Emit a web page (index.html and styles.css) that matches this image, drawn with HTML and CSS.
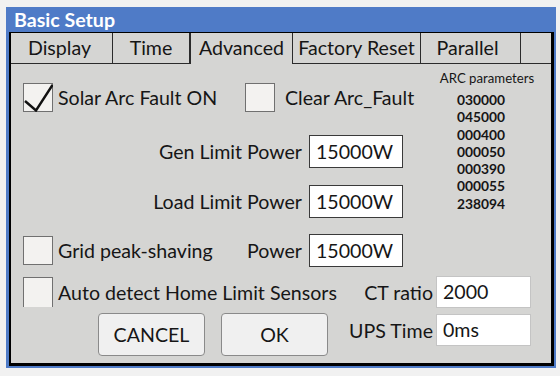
FILE: index.html
```html
<!DOCTYPE html>
<html lang="en">
<head>
  <meta charset="UTF-8" />
  <title>Basic Setup</title>
  <link rel="stylesheet" href="styles.css">
</head>
<body>

  <div class="window">
    <div class="titlebar">Basic Setup</div>

    <div class="frame">
      <div class="tabs">
        <div class="tab tab-display">Display</div>
        <div class="tab tab-time">Time</div>
        <div class="tab tab-advanced active">Advanced</div>
        <div class="tab tab-factory">Factory Reset</div>
        <div class="tab tab-parallel">Parallel</div>
        <div class="tab tab-rest"></div>
      </div>

      <div class="panel">
        <div class="top">
          <div class="form">
            <div class="row row-arc">
              <label class="check check-solar">
                <span class="box">
                  <svg width="30" height="29" viewBox="0 0 30 29">
                    <path d="M2 18 L13 27.5 L29.5 2" fill="none" stroke="#111" stroke-width="2.4" />
                  </svg>
                </span>
                Solar Arc Fault ON
              </label>
              <label class="check check-clear">
                <span class="box"></span>
                Clear Arc_Fault
              </label>
            </div>

            <div class="field row-gen">
              <span class="label">Gen Limit Power</span>
              <div class="input">15000W</div>
            </div>

            <div class="field row-load">
              <span class="label">Load Limit Power</span>
              <div class="input">15000W</div>
            </div>

            <div class="field row-grid">
              <label class="check">
                <span class="box"></span>
                Grid peak-shaving
              </label>
              <span class="label push">Power</span>
              <div class="input">15000W</div>
            </div>
          </div>

          <div class="arc">
            <div class="arc-title">ARC parameters</div>
            <ul class="arc-values">
              <li>030000</li>
              <li>045000</li>
              <li>000400</li>
              <li>000050</li>
              <li>000390</li>
              <li>000055</li>
              <li>238094</li>
            </ul>
          </div>
        </div>

        <div class="row row-auto">
          <label class="check">
            <span class="box box-open"></span>
            Auto detect Home Limit Sensors
          </label>
          <div class="pair">
            <span class="label">CT ratio</span>
            <div class="input input-light">2000</div>
          </div>
        </div>

        <div class="row row-buttons">
          <button class="btn btn-cancel">CANCEL</button>
          <button class="btn btn-ok">OK</button>
          <div class="pair">
            <span class="label">UPS Time</span>
            <div class="input input-light">0ms</div>
          </div>
        </div>
      </div>
    </div>
  </div>

</body>
</html>
```

FILE: styles.css
```css
:root {
  --blue: #4f7bc7;
  --panel: #d5d5d3;
  --line: #2b2b2b;
  --text: #161616;
}

body {
  margin: 0;
  padding: 7px 0 0 6px;
  background: #f1f1f1;
  font-family: Lato, "Open Sans", sans-serif;
  font-size: 19.6px;
  color: var(--text);
}

.window {
  width: 550px;
  height: 361px;
  box-sizing: border-box;
  background: var(--blue);
  padding: 0 2px 2px 3px;
  display: flex;
  flex-direction: column;
}

.titlebar {
  height: 25px;
  line-height: 25px;
  padding-left: 5px;
  color: #fff;
  font-weight: bold;
  font-size: 19.6px;
}

.frame {
  flex: 1;
  background: var(--panel);
  border: solid #000;
  border-width: 1px 3px 3px 2px;
  display: flex;
  flex-direction: column;
}

/* tab strip */
.tabs {
  display: flex;
  height: 31px;
}

.tab {
  box-sizing: border-box;
  height: 31px;
  line-height: 30px;
  text-align: center;
  border-right: 1px solid var(--line);
  border-bottom: 1px solid var(--line);
}

.tab.active {
  border-bottom: none;
}

.tab-display { width: 102px; padding-right: 4px; }
.tab-time { width: 78px; border-right-width: 2px; }
.tab-advanced { width: 102px; }
.tab-factory { width: 128px; }
.tab-parallel { width: 100px; padding-right: 6px; }
.tab-rest { flex: 1; border-right: none; }

/* panel */
.panel {
  flex: 1;
  padding: 0 20px 0 12px;
}

.top {
  display: flex;
}

.form {
  width: 400px;
}

.row {
  display: flex;
  align-items: center;
}

.row-arc {
  margin-top: 19px;
  height: 29px;
}

.check {
  display: flex;
  align-items: center;
  gap: 5px;
  white-space: nowrap;
}

.check-solar {
  width: 222px;
}

.check-clear {
  gap: 10px;
}

.box {
  box-sizing: border-box;
  width: 30px;
  height: 29px;
  background: #f3f2f0;
  border: 1px solid #707070;
  display: block;
}

.box svg {
  display: block;
  margin: -1px;
}

.box-open {
  height: 30px;
  border-bottom: none;
}

.field {
  width: 380px;
  display: flex;
  align-items: center;
  justify-content: flex-end;
  gap: 7px;
}

.row-gen { margin-top: 23px; }
.row-load { margin-top: 17px; }
.row-grid { margin-top: 16px; }

.push {
  margin-left: auto;
}

.input {
  box-sizing: border-box;
  width: 94px;
  height: 33px;
  line-height: 31px;
  padding-left: 6px;
  background: #fff;
  border: 1px solid #3a3a3a;
}

.input-light {
  width: 95px;
  height: 32px;
  line-height: 30px;
  border-color: #c4c4c4;
}

/* arc parameter column */
.arc {
  width: 100px;
  margin-left: auto;
  padding-top: 6px;
  text-align: center;
}

.arc-title {
  font-size: 13.2px;
  line-height: 17px;
  white-space: nowrap;
  margin-left: 6px;
  margin-right: -6px;
}

.arc-values {
  list-style: none;
  margin: 4px 0 0;
  padding: 0;
  font-size: 13.8px;
  font-weight: bold;
  line-height: 17.3px;
}

/* bottom rows */
.row-auto {
  margin-top: 9px;
  height: 32px;
}

.pair {
  margin-left: auto;
  display: flex;
  align-items: center;
  gap: 3px;
}

.row-buttons {
  margin-top: 5px;
  align-items: flex-start;
}

.row-buttons .pair {
  margin-top: 1px;
}

.btn {
  width: 107px;
  height: 43px;
  background: #f0f0f0;
  border: 1px solid #8a8a8a;
  border-radius: 4px;
  font-family: inherit;
  font-size: 19.6px;
  color: var(--text);
  padding: 0;
}

.btn-cancel { margin-left: 75px; }
.btn-ok { margin-left: 16px; }
```
